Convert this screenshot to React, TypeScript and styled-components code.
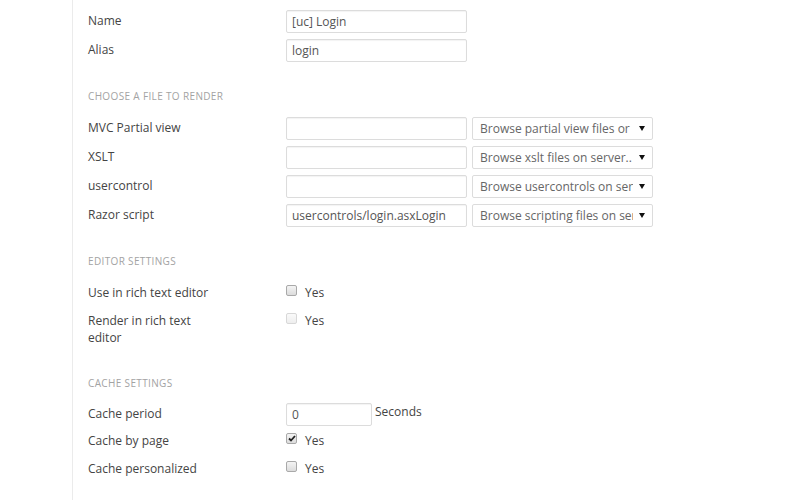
import React from "react";
import styled, { createGlobalStyle } from "styled-components";

const Global = createGlobalStyle`
  html, body { margin: 0; padding: 0; background: #fff; }
  body { font-family: "Open Sans", "Liberation Sans", sans-serif; }
`;

const Page = styled.div`
  width: 800px;
  height: 500px;
  overflow: hidden;
  background: #fff;
  padding-left: 72px;
  box-sizing: border-box;
`;

const Panel = styled.div`
  height: 100%;
  border-left: 1px solid #ebebeb;
  padding: 10px 0 0 15px;
  box-sizing: border-box;
`;

const Row = styled.div<{ $check?: boolean }>`
  display: grid;
  grid-template-columns: 198px 1fr;
  margin-bottom: 6px;
  min-height: ${(p) => (p.$check ? 22 : 0)}px;
  box-sizing: border-box;
`;

const Label = styled.div<{ $pad?: number }>`
  font-size: 12px;
  line-height: 17px;
  color: #444;
  padding-top: ${(p) => p.$pad ?? 2}px;
  width: 132px;
`;

const Controls = styled.div`
  display: flex;
  align-items: flex-start;
  gap: 5px;
`;

const TextBox = styled.div<{ $w?: number }>`
  width: ${(p) => p.$w ?? 181}px;
  height: 23px;
  box-sizing: border-box;
  border: 1px solid #dcdcdc;
  border-radius: 2px;
  box-shadow: inset 0 1px 1px rgba(0, 0, 0, 0.05);
  padding: 0 5px;
  font-size: 12px;
  line-height: 21px;
  color: #555;
  white-space: nowrap;
  overflow: hidden;
`;

const Select = styled.div`
  width: 181px;
  height: 23px;
  box-sizing: border-box;
  border: 1px solid #dcdcdc;
  border-radius: 2px;
  padding: 0 4px 0 7px;
  display: flex;
  align-items: center;
  font-size: 12px;
  color: #666;
`;

const SelectText = styled.span`
  flex: 1;
  overflow: hidden;
  white-space: nowrap;
`;

const Arrow = styled.span`
  width: 0;
  height: 0;
  border-left: 3px solid transparent;
  border-right: 3px solid transparent;
  border-top: 5px solid #111;
  margin: 0 3px 0 6px;
`;

const Header = styled.div<{ $mt?: number; $mb?: number }>`
  font-size: 10px;
  line-height: 14px;
  letter-spacing: 0.35px;
  color: #a3a3a3;
  text-transform: uppercase;
  margin: ${(p) => p.$mt ?? 27}px 0 ${(p) => p.$mb ?? 14}px;
`;

const Check = styled.span<{ $faint?: boolean }>`
  width: 11px;
  height: 11px;
  box-sizing: border-box;
  border: 1px solid ${(p) => (p.$faint ? "#d8d8d8" : "#a9a9a9")};
  border-radius: 2px;
  background: ${(p) =>
    p.$faint ? "linear-gradient(#fafafa, #eee)" : "linear-gradient(#f4f4f4, #dcdcdc)"};
  display: inline-flex;
  align-items: center;
  justify-content: center;
  margin-top: 1px;
`;

const CheckLine = styled.div`
  display: flex;
  align-items: flex-start;
  gap: 8px;
  font-size: 12px;
  line-height: 17px;
  color: #444;
`;

const Unit = styled.span`
  font-size: 12px;
  line-height: 17px;
  color: #444;
  margin-left: -2px;
`;

const CheckRow: React.FC<{ label: string; checked?: boolean; faint?: boolean }> = ({
  label,
  checked,
  faint,
}) => (
  <Row $check>
    <Label $pad={0}>{label}</Label>
    <CheckLine>
      <Check $faint={faint}>
        {checked && (
          <svg width="8" height="7" viewBox="0 0 8 7">
            <path d="M1 3.5 L3 5.5 L7 1" stroke="#222" strokeWidth="1.8" fill="none" />
          </svg>
        )}
      </Check>
      <span>Yes</span>
    </CheckLine>
  </Row>
);

const FileRow: React.FC<{ label: string; value?: string; browse: string }> = ({
  label,
  value,
  browse,
}) => (
  <Row>
    <Label>{label}</Label>
    <Controls>
      <TextBox>{value}</TextBox>
      <Select>
        <SelectText>{browse}</SelectText>
        <Arrow />
      </Select>
    </Controls>
  </Row>
);

export default function App() {
  return (
    <Page>
      <Global />
      <Panel>
        <Row>
          <Label>Name</Label>
          <TextBox>[uc] Login</TextBox>
        </Row>
        <Row>
          <Label>Alias</Label>
          <TextBox>login</TextBox>
        </Row>

        <Header>Choose a file to render</Header>
        <FileRow label="MVC Partial view" browse="Browse partial view files or" />
        <FileRow label="XSLT" browse="Browse xslt files on server.." />
        <FileRow label="usercontrol" browse="Browse usercontrols on server" />
        <FileRow
          label="Razor script"
          value="usercontrols/login.asxLogin"
          browse="Browse scripting files on server"
        />

        <Header $mt={27} $mb={16}>Editor settings</Header>
        <CheckRow label="Use in rich text editor" />
        <CheckRow label="Render in rich text editor" faint />

        <Header $mt={30} $mb={13}>Cache settings</Header>
        <Row>
          <Label>Cache period</Label>
          <Controls>
            <TextBox $w={86}>0</TextBox>
            <Unit>Seconds</Unit>
          </Controls>
        </Row>
        <CheckRow label="Cache by page" checked />
        <CheckRow label="Cache personalized" />
      </Panel>
    </Page>
  );
}
